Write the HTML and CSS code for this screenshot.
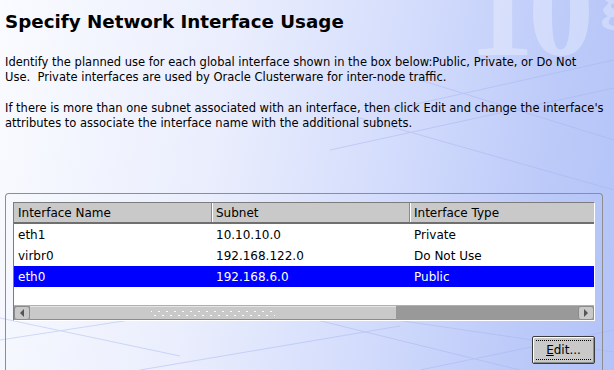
FILE: index.html
```html
<!DOCTYPE html>
<html lang="en">
  <head>
    <meta charset="UTF-8" />
    <title>Specify Network Interface Usage</title>
    <link rel="stylesheet" href="styles.css">
  </head>
  <body>
    <div class="page">
      <div class="watermark">10<span class="sup">g</span></div>
      <svg class="grid" width="614" height="370" viewBox="0 0 614 370">
        <g stroke="#a3b4ee" stroke-width="1" fill="none" opacity="0.45">
          <path d="M380 112 L614 60" />
          <path d="M330 150 L614 88" />
          <path d="M420 80 L614 140" />
          <path d="M360 118 L614 190" />
          <path d="M0 340 L260 300 L614 352" />
          <path d="M0 318 L180 356" />
          <path d="M140 370 L400 326" />
          <path d="M420 370 L614 330" />
          <path d="M260 306 L520 370" />
        </g>
      </svg>

      <h1 class="title">Specify Network Interface Usage</h1>
      <p class="intro">Identify the planned use for each global interface shown in the box below:Public, Private, or Do Not<br>Use.&nbsp; Private interfaces are used by Oracle Clusterware for inter-node traffic.</p>
      <p class="intro">If there is more than one subnet associated with an interface, then click Edit and change the interface's attributes to associate the interface name with the additional subnets.</p>

      <div class="panel">
        <div class="table">
          <div class="row head">
            <div class="cell">Interface Name</div>
            <div class="cell">Subnet</div>
            <div class="cell">Interface Type</div>
          </div>
          <div class="row">
            <div class="cell">eth1</div>
            <div class="cell">10.10.10.0</div>
            <div class="cell">Private</div>
          </div>
          <div class="row">
            <div class="cell">virbr0</div>
            <div class="cell">192.168.122.0</div>
            <div class="cell">Do Not Use</div>
          </div>
          <div class="row selected">
            <div class="cell">eth0</div>
            <div class="cell">192.168.6.0</div>
            <div class="cell">Public</div>
          </div>
          <div class="filler"></div>
          <div class="hscroll">
            <div class="arrow left"><span class="tri-left"></span></div>
            <div class="thumb"><span class="grip"></span></div>
            <div class="track"></div>
            <div class="arrow right"><span class="tri-right"></span></div>
          </div>
        </div>
        <div class="actions">
          <button class="btn"><span class="focus"><u>E</u>dit...</span></button>
        </div>
      </div>
    </div>
  </body>
</html>
```

FILE: styles.css
```css
* {
  margin: 0;
  padding: 0;
  box-sizing: border-box;
}

body {
  width: 614px;
  height: 370px;
  overflow: hidden;
  font-family: "DejaVu Sans", "Liberation Sans", sans-serif;
  font-size: 11.5px;
  color: #000;
}

.page {
  position: relative;
  height: 370px;
  padding: 0 11px 0 5px;
  background: linear-gradient(100deg, #fafbff 0%, #eaeefd 35%, #d3dcfc 62%, #bccaf9 85%, #b3c3f8 100%);
  overflow: hidden;
}

.watermark {
  position: absolute;
  top: -55px;
  left: 468px;
  font-family: "Liberation Serif", serif;
  font-weight: bold;
  font-size: 132px;
  letter-spacing: -6px;
  color: rgba(255, 255, 255, 0.3);
  line-height: 1;
}

.watermark .sup {
  font-size: 70px;
  vertical-align: 40px;
  margin-left: 12px;
}

.grid {
  position: absolute;
  top: 0;
  left: 0;
}

.title {
  position: relative;
  font-size: 18.3px;
  font-weight: bold;
  line-height: 22px;
  padding-top: 11px;
}

.intro {
  position: relative;
  line-height: 15px;
  margin-top: 22px;
  width: 608px;
}

.intro + .intro {
  margin-top: 16px;
}

.panel {
  position: relative;
  margin-top: 62px;
  height: 200px;
  border: 1px solid #8e8e8e;
  border-bottom: none;
  border-radius: 4px 4px 0 0;
  padding: 8px 7px 0 7px;
}

.table {
  border: 1px solid #7c7c7c;
  border-right-color: #fff;
  border-bottom-color: #fff;
  background: #fff;
  font-size: 12px;
}

.row {
  display: grid;
  grid-template-columns: 198px 198px 1fr;
  height: 21px;
  align-items: center;
}

.row .cell {
  padding-left: 4px;
  white-space: nowrap;
}

.row.head {
  height: 21px;
  background: #c9c9c9;
  border-bottom: 2px solid #6f6f6f;
}

.row.head .cell {
  height: 100%;
  display: flex;
  align-items: center;
  border-right: 1px solid #8a8a8a;
  box-shadow: inset 1px 0 0 #fff;
}

.row.head .cell:first-child {
  box-shadow: none;
}

.row.head .cell:last-child {
  border-right: none;
}

.row.selected {
  background: #0000ff;
  color: #fff;
}

.filler {
  height: 18px;
}

.hscroll {
  display: flex;
  height: 15px;
  background: #999;
  border-top: 1px solid #b0b0b0;
}

.arrow {
  width: 16px;
  background: #c9c9c9;
  border: 1px solid #8c8c8c;
  border-radius: 3px;
  display: flex;
  align-items: center;
  justify-content: center;
}

.tri-left {
  border-top: 4px solid transparent;
  border-bottom: 4px solid transparent;
  border-right: 4px solid #555;
}

.tri-right {
  border-top: 4px solid transparent;
  border-bottom: 4px solid transparent;
  border-left: 4px solid #555;
}

.thumb {
  width: 366px;
  background: #c9c9c9;
  border-top: 1px solid #e4e4e4;
  border-bottom: 1px solid #8c8c8c;
  display: flex;
  align-items: center;
  justify-content: center;
}

.grip {
  width: 124px;
  height: 7px;
  background-image:
    radial-gradient(circle, #fff 0.9px, transparent 1px),
    radial-gradient(circle, #fff 0.9px, transparent 1px);
  background-size: 8px 7px, 8px 7px;
  background-position: 4px -2px, 0 2px;
}

.track {
  flex: 1;
}

.actions {
  display: flex;
  justify-content: flex-end;
  margin-top: 15px;
}

.btn {
  width: 63px;
  height: 28px;
  background: #c9c9c9;
  border: 1px solid #3c3c3c;
  border-radius: 2px;
  box-shadow: inset 1px 1px 0 #fff, inset -1px -1px 0 #8c8c8c;
  font-family: "DejaVu Sans", "Liberation Sans", sans-serif;
  font-size: 12px;
  color: #000;
  padding: 3px;
}

.btn .focus {
  display: block;
  height: 100%;
  border-top: 1px dotted #000;
  border-bottom: 1px dotted #000;
  line-height: 18px;
}
```
